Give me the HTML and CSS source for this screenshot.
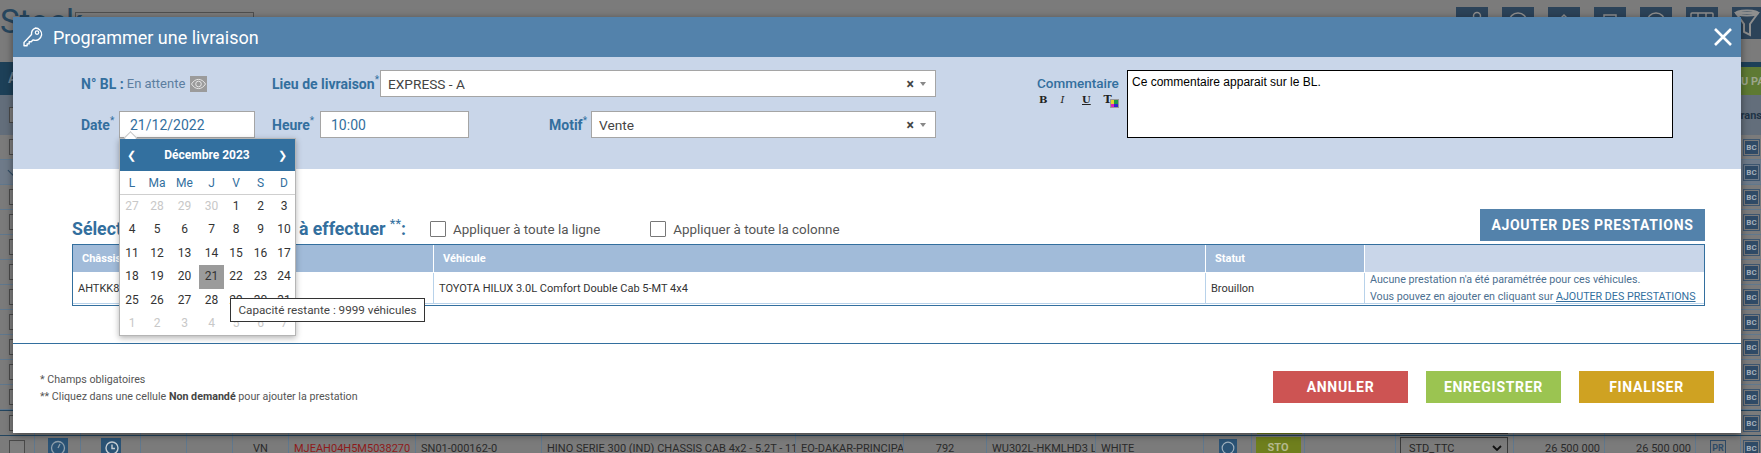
FILE: index.html
```html
<!DOCTYPE html>
<html lang="fr">
<head>
<meta charset="utf-8">
<title>Programmer une livraison</title>
<link rel="stylesheet" href="styles.css">
</head>
<body>
<div class="page">
  <div class="bg-top">
    <div class="bg-title">Stock</div>
    <div class="bg-search"></div>
    <div class="bg-tools">
      <span class="bg-tool"><svg class="bg-funnel" viewBox="0 0 32 32"><circle cx="21" cy="9" r="3.500" fill="none" stroke="#8f8f8f" stroke-width="1.500"/><path d="M6 15c3-2 7-3 10-3" fill="none" stroke="#8f8f8f" stroke-width="1.500"/></svg></span>
      <span class="bg-tool"><svg class="bg-funnel" viewBox="0 0 32 32"><circle cx="16" cy="15" r="9" fill="none" stroke="#8f8f8f" stroke-width="1.500"/></svg></span>
      <span class="bg-tool"><svg class="bg-funnel" viewBox="0 0 32 32"><path d="M7 17l9-9 9 9" fill="none" stroke="#8f8f8f" stroke-width="1.500"/></svg></span>
      <span class="bg-tool"><svg class="bg-funnel" viewBox="0 0 32 32"><rect x="10" y="8" width="12" height="16" fill="none" stroke="#8f8f8f" stroke-width="1.500"/></svg></span>
      <span class="bg-tool"><svg class="bg-funnel" viewBox="0 0 32 32"><circle cx="16" cy="15" r="9" fill="none" stroke="#8f8f8f" stroke-width="1.500"/></svg></span>
      <span class="bg-tool"><svg class="bg-funnel" viewBox="0 0 32 32"><rect x="5" y="6" width="22" height="18" rx="1" fill="none" stroke="#8f8f8f" stroke-width="1.500"/><path d="M12 6v18M20 6v18" stroke="#8f8f8f" stroke-width="1.500"/></svg></span>
      <span class="bg-tool">
        <svg class="bg-funnel" viewBox="0 0 32 32"><path d="M4 6h22l-8 11v11l-6-3v-8z" fill="none" stroke="#8f8f8f" stroke-width="2"/><ellipse cx="15" cy="6" rx="11" ry="2.500" fill="none" stroke="#8f8f8f" stroke-width="2"/></svg>
      </span>
    </div>
  </div>
  <div class="bg-bar"><span class="bg-bar-a">A</span><span class="bg-bar-green">U PA</span></div>
  <div class="bg-head"><span class="bg-check"></span><span class="bg-trans">Trans</span></div>
  <div class="bg-row"><span class="bg-check"></span><span class="bg-bc">BC</span></div>
  <div class="bg-row bg-row-group"><span class="bg-chevron"></span><span class="bg-bc">BC</span></div>
  <div class="bg-row"><span class="bg-check"></span><span class="bg-bc">BC</span></div>
  <div class="bg-row"><span class="bg-check"></span><span class="bg-bc">BC</span></div>
  <div class="bg-row"><span class="bg-check"></span><span class="bg-bc">BC</span></div>
  <div class="bg-row"><span class="bg-check"></span><span class="bg-bc">BC</span></div>
  <div class="bg-row"><span class="bg-check"></span><span class="bg-bc">BC</span></div>
  <div class="bg-row"><span class="bg-check"></span><span class="bg-bc">BC</span></div>
  <div class="bg-row"><span class="bg-check"></span><span class="bg-bc">BC</span></div>
  <div class="bg-row"><span class="bg-check"></span><span class="bg-bc">BC</span></div>
  <div class="bg-row"><span class="bg-check"></span><span class="bg-bc">BC</span></div>
  <div class="bg-data">
    <span class="cell"><span class="bg-check"></span></span><span class="cell"><span class="bg-square"></span></span><span class="cell"><span class="bg-square bg-square-wide"></span></span><span class="cell"></span><span class="cell"></span><span class="cell"></span><span class="cell"></span><span class="cell"></span><span class="cell"></span><span class="cell"></span><span class="cell"></span><span class="cell"></span><span class="cell"></span><span class="cell"><span class="bg-square"></span></span><span class="cell"><span class="bg-sto"></span></span><span class="cell"></span><span class="cell"><span class="bg-select"></span></span><span class="cell"></span><span class="cell"></span><span class="cell"></span><span class="cell cell-end"><span class="bg-bc">BC</span></span>
  </div>
  <div class="bg-data">
    <span class="cell"><span class="bg-check"></span></span>
    <span class="cell">
      <span class="bg-square"><svg class="bg-icon" viewBox="0 0 20 20"><circle cx="10" cy="10" r="6.500" fill="none" stroke="#8fa0ad" stroke-width="1.300"/><path d="M10 10l2-4" stroke="#8fa0ad" stroke-width="1.300"/></svg></span>
    </span>
    <span class="cell">
      <span class="bg-square bg-square-wide"><svg class="bg-icon" viewBox="0 0 20 20"><circle cx="11" cy="10" r="6" fill="none" stroke="#c5cdd3" stroke-width="1.400"/><path d="M11 6.500v4h3" fill="none" stroke="#c5cdd3" stroke-width="1.400"/></svg></span>
    </span>
    <span class="cell"></span>
    <span class="cell"></span>
    <span class="cell cell-center">VN</span>
    <span class="cell cell-red">MJEAH04H5M5038270</span>
    <span class="cell">SN01-000162-0</span>
    <span class="cell">HINO SERIE 300 (IND) CHASSIS CAB 4x2 - 5.2T - 11</span>
    <span class="cell">EO-DAKAR-PRINCIPAL</span>
    <span class="cell cell-center">792</span>
    <span class="cell">WU302L-HKMLHD3 L</span>
    <span class="cell">WHITE</span>
    <span class="cell cell-center"><span class="bg-square bg-square-small"><svg class="bg-icon" viewBox="0 0 20 20"><circle cx="10" cy="10" r="6.500" fill="none" stroke="#9fb0bd" stroke-width="1.300"/></svg></span></span>
    <span class="cell cell-center"><span class="bg-sto">STO</span></span>
    <span class="cell"></span>
    <span class="cell"><span class="bg-select">STD_TTC<svg class="bg-select-caret" viewBox="0 0 10 6"><path d="M1 1l4 4 4-4" fill="none" stroke="#111" stroke-width="1.800"/></svg></span></span>
    <span class="cell cell-right">26 500 000</span>
    <span class="cell cell-right">26 500 000</span>
    <span class="cell cell-center"><span class="bg-pr">PR</span></span>
    <span class="cell cell-end"><span class="bg-bc">BC</span></span>
  </div>

  <section class="modal">
    <header class="modal-head">
      <svg class="key-icon" viewBox="0 0 24 24">
        <path d="M14.500 2.200a7 7 0 0 1 6.900 7.600 7 7 0 0 1-9.500 5.400l-1.800 2h-2.300v2.300H5.600v2H2.200v-3.600l8.200-8.600a7 7 0 0 1 4.100-7.100z" fill="none" stroke="#fff" stroke-width="1.500" stroke-linejoin="round"/>
        <circle cx="16.400" cy="7.200" r="1.900" fill="none" stroke="#fff" stroke-width="1.300"/>
      </svg>
      <h1 class="modal-title">Programmer une livraison</h1>
      <svg class="close-icon" viewBox="0 0 18 18"><path d="M1 1l16 16M17 1L1 17" stroke="#fff" stroke-width="2.600" fill="none"/></svg>
    </header>

    <div class="band">
      <div class="band-form">
        <div class="form-row">
          <div class="bl-block">
            <span class="label">N° BL :</span>
            <span class="bl-value">En attente</span>
            <span class="eye-box"><svg viewBox="0 0 16 16"><path d="M1 8c2-3.200 4.400-4.600 7-4.600S13 4.800 15 8c-2 3.200-4.400 4.600-7 4.600S3 11.200 1 8z" fill="none" stroke="#e6e6e6" stroke-width="1"/><circle cx="8" cy="8" r="2.800" fill="none" stroke="#e6e6e6" stroke-width="1"/></svg></span>
          </div>
          <span class="label label-lieu">Lieu de livraison<sup>*</sup></span>
          <div class="field field-lieu">
            <span class="field-text">EXPRESS - A</span>
            <span class="select-clear">×</span><span class="select-caret"></span>
          </div>
        </div>
        <div class="form-row">
          <span class="label label-date">Date<sup>*</sup></span>
          <div class="date-wrap">
            <div class="field field-date"><span class="field-text field-blue">21/12/2022</span></div>
            <div class="calendar">
              <span class="cal-tip"></span>
              <div class="cal-head"><span class="cal-nav">❮</span><span class="cal-month">Décembre 2023</span><span class="cal-nav">❯</span></div>
              <div class="cal-weekdays">
                <span>L</span><span>Ma</span><span>Me</span><span>J</span><span>V</span><span>S</span><span>D</span>
              </div>
              <div class="cal-days">
                <span class="off">27</span><span class="off">28</span><span class="off">29</span><span class="off">30</span><span>1</span><span>2</span><span>3</span>
                <span>4</span><span>5</span><span>6</span><span>7</span><span>8</span><span>9</span><span>10</span>
                <span>11</span><span>12</span><span>13</span><span>14</span><span>15</span><span>16</span><span>17</span>
                <span>18</span><span>19</span><span>20</span><span class="selected">21</span><span>22</span><span>23</span><span>24</span>
                <span>25</span><span>26</span><span>27</span><span>28</span><span>29</span><span>30</span><span>31</span>
                <span class="off">1</span><span class="off">2</span><span class="off">3</span><span class="off">4</span><span class="off">5</span><span class="off">6</span><span class="off">7</span>
              </div>
              <div class="tooltip">Capacité restante : 9999 véhicules</div>
            </div>
          </div>
          <span class="label label-heure">Heure<sup>*</sup></span>
          <div class="field field-heure"><span class="field-text field-blue">10:00</span></div>
          <span class="label label-motif">Motif<sup>*</sup></span>
          <div class="field field-motif">
            <span class="field-text">Vente</span>
            <span class="select-clear">×</span><span class="select-caret"></span>
          </div>
        </div>
      </div>
      <div class="comment-side">
        <span class="comment-label">Commentaire</span>
        <div class="rte-tools">
          <span class="rte rte-b">B</span><span class="rte rte-i">I</span><span class="rte rte-u">U</span>
          <span class="rte rte-t">T<span class="rte-colors"><i class="c1"></i><i class="c2"></i><i class="c3"></i><i class="c4"></i></span></span>
        </div>
      </div>
      <div class="comment-box">Ce commentaire apparait sur le BL.</div>
    </div>

    <div class="body">
      <div class="body-bar">
        <h2 class="select-title">Sélectionner les prestations à effectuer <sup>**</sup>:</h2>
        <label class="apply"><span class="apply-box"></span>Appliquer à toute la ligne</label>
        <label class="apply"><span class="apply-box"></span>Appliquer à toute la colonne</label>
        <button class="btn btn-add">AJOUTER DES PRESTATIONS</button>
      </div>
      <div class="grid-table">
        <div class="th">Châssis</div>
        <div class="th">Véhicule</div>
        <div class="th">Statut</div>
        <div class="th th-light"></div>
        <div class="td">AHTKK8C</div>
        <div class="td">TOYOTA HILUX 3.0L Comfort Double Cab 5-MT 4x4</div>
        <div class="td">Brouillon</div>
        <div class="td td-note">
          <span>Aucune prestation n'a été paramétrée pour ces véhicules.</span>
          <span>Vous pouvez en ajouter en cliquant sur <a class="note-link" href="#">AJOUTER DES PRESTATIONS</a></span>
        </div>
      </div>
    </div>

    <footer class="modal-foot">
      <div class="notes">
        <span>* Champs obligatoires</span>
        <span>** Cliquez dans une cellule <b>Non demandé</b> pour ajouter la prestation</span>
      </div>
      <div class="foot-actions">
        <button class="btn btn-red">ANNULER</button>
        <button class="btn btn-green">ENREGISTRER</button>
        <button class="btn btn-gold">FINALISER</button>
      </div>
    </footer>
  </section>
</div>
</body>
</html>
```

FILE: styles.css
```css
* { box-sizing: border-box; }
html, body { margin: 0; padding: 0; }
body { font-family: Roboto, "Liberation Sans", sans-serif; background: #7b7b7b; }
.page { position: relative; width: 1761px; height: 453px; overflow: hidden; background: #7b7b7b; }

/* dimmed page behind the dialog */
.bg-top { height: 62px; display: flex; align-items: flex-start; }
.bg-title { width: 75px; padding-top: 3px; font-size: 33px; line-height: 38px; color: #26465e; }
.bg-search { width: 179px; height: 30px; margin-top: 12px; border: 1px solid #4f4f4f; }
.bg-tools { margin-left: auto; margin-top: 7px; width: 305px; display: flex; gap: 14px; flex: none; }
.bg-tool { flex: none; width: 32px; height: 32px; background: #2c4359; }
.bg-funnel { display: block; width: 32px; height: 32px; }
.bg-bar { height: 33px; background: #1d4058; display: flex; align-items: stretch; justify-content: space-between; }
.bg-bar-a { padding: 8px 0 0 8px; font-size: 14px; font-weight: 700; color: #6d7f8d; }
.bg-bar-green { width: 20px; margin-top: 5px; padding: 8px 0 0 0; background: #5e7a33; color: #9ba58c; font-size: 11px; font-weight: 700; white-space: nowrap; overflow: hidden; }
.bg-head { height: 40px; background: #636e7b; display: flex; align-items: center; justify-content: space-between; padding-left: 9px; }
.bg-trans { width: 21px; overflow: hidden; font-size: 11px; font-weight: 700; color: #1e3346; white-space: nowrap; text-indent: -6px; }
.bg-row { height: 25px; display: flex; align-items: center; justify-content: space-between; padding-left: 9px; border-bottom: 1px solid #60788e; }
.bg-row-group { background: #6e7a89; }
.bg-check { display: block; flex: none; width: 16px; height: 16px; border: 1px solid #4a4a4a; background: #7f7f7f; }
.bg-chevron { display: block; width: 7px; height: 7px; margin-bottom: 4px; border: solid #2c4a62; border-width: 0 0 1px 1px; transform: rotate(-45deg); }
.bg-bc { display: block; flex: none; width: 13px; height: 13px; margin-right: 3px; background: #2f4a66; color: #a5b1bc; font-size: 8px; line-height: 13px; font-weight: 700; text-align: center; outline: 1px solid #3d5670; outline-offset: 1px; }
.bg-data { height: 25px; display: grid; grid-template-columns: 35px 46px 60px 46px 46px 56px 127px 126px 254px 108px 83px 109px 108px 48px 53px 91px 118px 91px 91px 45px 20px; border-top: 1px solid #23455f; }
.cell { display: flex; align-items: center; padding: 0 5px; overflow: hidden; white-space: nowrap; font-size: 11px; color: #2a2a2a; border-right: 1px solid #60788e; }
.cell:first-child { padding-left: 9px; }
.cell-center { justify-content: center; }
.cell-right { justify-content: flex-end; padding-right: 4px; }
.cell-red { color: #8f1a1a; }
.cell-end { padding: 0 0 0 4px; border-right: 0; }
.bg-square { display: block; flex: none; width: 20px; height: 20px; margin-left: 8px; background: #2b5375; }
.bg-square-wide { margin-left: 15px; }
.bg-square-small { width: 18px; height: 18px; margin-left: 0; }
.bg-icon { display: block; width: 100%; height: 100%; }
.bg-sto { display: block; flex: none; width: 45px; height: 22px; background: #6f7f1d; color: #b5b98e; font-size: 11px; line-height: 22px; font-weight: 700; text-align: center; }
.bg-select { display: flex; flex: none; align-items: center; justify-content: space-between; width: 108px; height: 22px; padding: 0 5px 0 8px; border: 1px solid #3a3a3a; color: #262626; margin-left: -1px; }
.bg-select-caret { width: 10px; height: 6px; }
.bg-pr { display: block; width: 16px; height: 16px; border: 1px solid #2f4a66; color: #2f4a66; font-size: 9px; line-height: 14px; font-weight: 700; text-align: center; }

/* dialog */
.modal { position: absolute; left: 13px; top: 17px; width: 1728px; height: 416px; background: #fff; box-shadow: 0 2px 8px rgba(0,0,0,.45); display: flex; flex-direction: column; }
.modal-head { height: 40px; flex: none; background: #5382ab; display: flex; align-items: center; padding: 0 9px 0 9px; }
.key-icon { width: 22px; height: 22px; flex: none; }
.modal-title { margin: 0 0 0 9px; font-size: 18px; font-weight: 400; color: #fff; }
.close-icon { width: 18px; height: 18px; margin-left: auto; margin-right: 0; flex: none; }

.band { height: 112px; flex: none; background: #c9d6e9; padding: 13px 0 0 68px; display: flex; align-items: flex-start; }
.band-form { width: 855px; flex: none; display: flex; flex-direction: column; gap: 14px; }
.form-row { height: 27px; display: flex; align-items: center; }
.label { flex: none; font-size: 14px; font-weight: 700; color: #336f9e; white-space: nowrap; }
.label sup { font-size: 10px; font-weight: 400; line-height: 0; }
.bl-block { width: 191px; flex: none; display: flex; align-items: center; }
.bl-value { margin-left: 3px; font-size: 13px; color: #5c7ea0; }
.eye-box { display: block; width: 17px; height: 16px; margin-left: 5px; background: #9b9b9b; }
.eye-box svg { display: block; width: 17px; height: 16px; }
.label-lieu { width: 108px; }
.label-date { width: 38px; }
.label-heure { width: 48px; margin-left: 17px; }
.label-motif { width: 42px; margin-left: 80px; }
.field { height: 27px; flex: none; display: flex; align-items: center; padding: 0 8px 0 7px; background: #fff; border: 1px solid #a5a5a5; }
.field-text { font-size: 13.700px; color: #444; }
.field-blue { font-size: 14px; color: #336f9e; padding-left: 3px; }
.field-lieu { width: 556px; }
.field-date { width: 136px; }
.field-heure { width: 149px; }
.field-motif { width: 345px; }
.select-clear { margin-left: auto; font-size: 14px; font-weight: 700; color: #444; }
.select-caret { width: 0; height: 0; margin-left: 6px; margin-right: 1px; border: solid transparent; border-width: 4px 3.500px 0; border-top-color: #888; }
.date-wrap { position: relative; flex: none; }

.calendar { position: absolute; z-index: 5; left: 0; top: 27px; width: 177px; background: #fff; border: 1px solid #b5b5b5; box-shadow: 0 2px 6px rgba(0,0,0,.3); }
.cal-tip { position: absolute; left: 6px; top: -6px; width: 9px; height: 9px; background: #fff; border: solid #c4c4c4; border-width: 1px 0 0 1px; transform: rotate(45deg); }
.cal-head { position: relative; height: 32px; background: #33709f; color: #fff; display: flex; align-items: center; justify-content: space-between; padding: 0 8px 0 7px; }
.cal-month { font-size: 12px; font-weight: 700; }
.cal-nav { font-size: 11px; }
.cal-weekdays, .cal-days { display: grid; grid-template-columns: 24px 26px 29px 25px 24px 25px 22px; text-align: center; }
.cal-weekdays { height: 24px; align-items: center; border-bottom: 1px solid #cfcfcf; font-size: 12px; color: #336f9e; }
.cal-days { grid-auto-rows: 23.400px; font-size: 12px; line-height: 23.400px; color: #333; }
.cal-days .off { color: #c8c8c8; }
.cal-days .selected { background: #9b9b9b; }
.tooltip { position: absolute; z-index: 6; left: 110px; top: 159px; width: 195px; height: 24px; background: #fff; border: 1px solid #333; font-size: 11.700px; line-height: 22px; color: #444; text-align: center; white-space: nowrap; }

.comment-side { width: 90px; flex: none; margin-left: 101px; padding-top: 5px; }
.comment-label { display: block; font-size: 13.500px; font-weight: 500; line-height: 16px; color: #336f9e; }
.rte-tools { display: flex; align-items: flex-start; margin-top: 2px; padding-left: 2px; height: 16px; }
.rte { width: 21.500px; flex: none; font-family: "DejaVu Serif", "Liberation Serif", serif; font-size: 10px; line-height: 13px; color: #222; }
.rte-b { font-weight: 700; }
.rte-i { font-style: italic; }
.rte-u { text-decoration: underline; font-weight: 700; }
.rte-t { position: relative; font-weight: 700; font-size: 11px; }
.rte-colors { position: absolute; left: 6px; top: 6px; width: 9px; height: 9px; display: grid; grid-template-columns: 1fr 1fr; background: #999; padding: 1px; }
.rte-colors i { display: block; }
.c1 { background: #e6d32a; } .c2 { background: #1c9a4b; } .c3 { background: #e21fb9; } .c4 { background: #3026cf; }
.comment-box { width: 546px; height: 68px; flex: none; border: 1.500px solid #000; background: #fff; padding: 4px 4px; font-family: "Liberation Sans", Arial, sans-serif; font-size: 12px; line-height: 14px; color: #000; }

.body { flex: 1; padding: 40px 36px 0 59px; }
.body-bar { display: flex; align-items: center; height: 32px; }
.select-title { margin: 0; width: 358px; flex: none; font-size: 17.700px; font-weight: 700; color: #336f9e; white-space: nowrap; padding-top: 7px; }
.select-title sup { font-size: 13px; line-height: 0; font-weight: 400; }
.apply { display: flex; align-items: center; font-size: 13.400px; color: #555; flex: none; padding-top: 8px; }
.apply-box { display: block; width: 16px; height: 16px; margin-right: 7px; background: #fff; border: 1px solid #777; border-radius: 1px; }
.apply + .apply { margin-left: 50px; }
.btn { border: 0; font-family: inherit; font-size: 14px; font-weight: 700; letter-spacing: .7px; color: #fff; cursor: pointer; }
.btn-add { margin-left: auto; width: 225px; height: 32px; background: #5382ab; }

.grid-table { margin-top: 3px; height: 62px; display: grid; grid-template-columns: 361px 772px 159px 1fr; grid-template-rows: 28px 31px; border: 1.500px solid #336f9e; }
.th { background: #a1bbd9; color: #fff; font-size: 11px; font-weight: 700; display: flex; align-items: center; padding-left: 9px; border-right: 1px solid #fff; border-bottom: 1px solid #fff; }
.th-light { background: #c9d6e9; border-right: 0; }
.td { display: flex; align-items: center; padding-left: 5px; font-size: 11px; color: #333; border-right: 1px solid #b8d2ea; border-bottom: 1px solid #b8d2ea; white-space: nowrap; }
.td-note { flex-direction: column; align-items: flex-start; justify-content: center; gap: 3px; border-right: 0; font-size: 10.700px; color: #4c6f90; line-height: 14px; }
.note-link { color: #336f9e; }

.modal-foot { height: 90px; flex: none; border-top: 1px solid #336f9e; display: flex; align-items: flex-start; justify-content: space-between; padding: 27px 27px 0 27px; }
.notes { display: flex; flex-direction: column; gap: 3px; padding-top: 2px; font-size: 10.700px; line-height: 14px; color: #555; }
.notes b { color: #444; }
.foot-actions { display: flex; gap: 18px; }
.foot-actions .btn { width: 135px; height: 32px; }
.btn-red { background: #cd5453; }
.btn-green { background: #9bc451; }
.btn-gold { background: #cfa222; }
```
